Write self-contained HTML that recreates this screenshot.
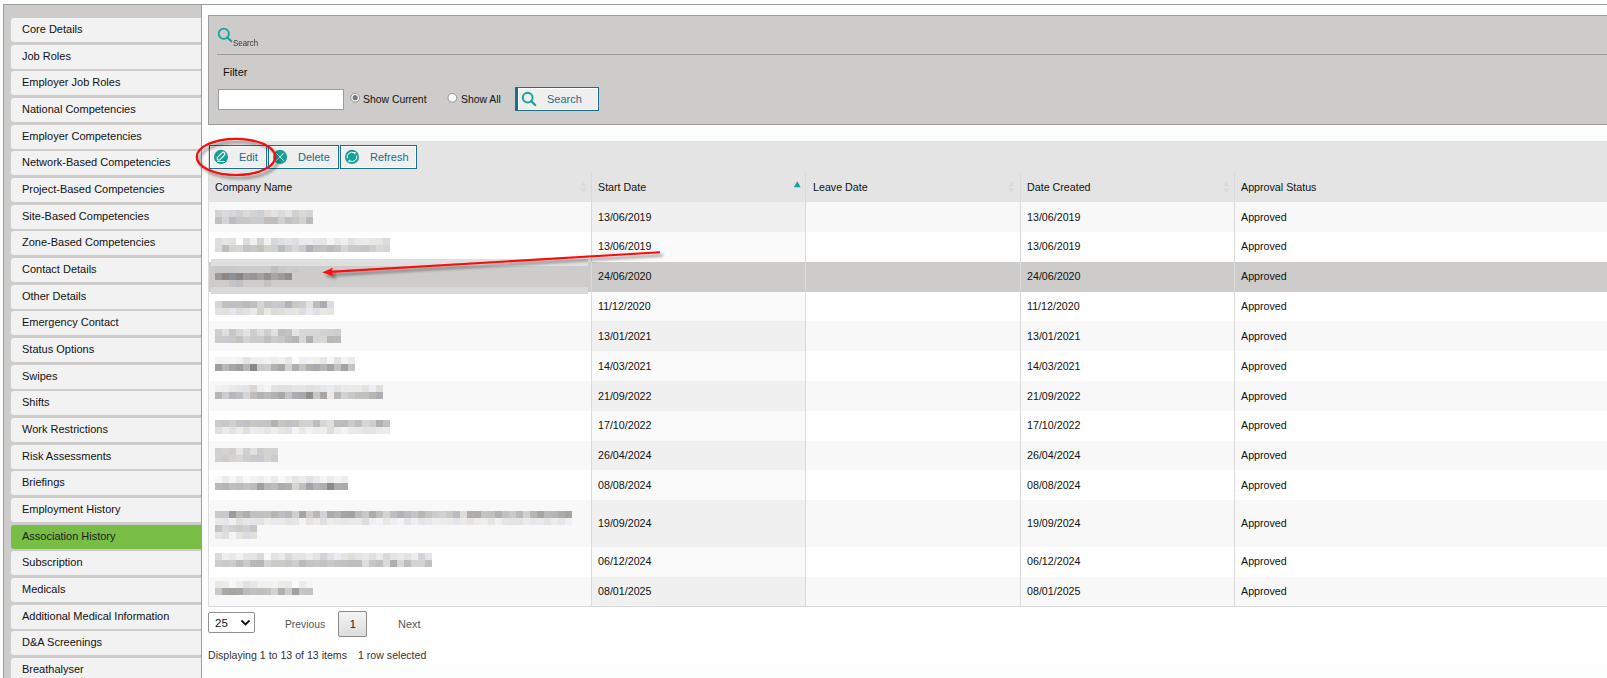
<!DOCTYPE html>
<html><head><meta charset="utf-8">
<style>
*{box-sizing:border-box}
html,body{margin:0;padding:0}
body{width:1607px;height:678px;overflow:hidden;position:relative;background:#fcfdfd;font-family:"Liberation Sans",sans-serif;font-size:11px;color:#222}
.a{position:absolute}
#topline{left:3px;top:4px;width:1604px;height:1px;background:#9c9c9c}
#side{left:3px;top:4px;width:199px;height:700px;background:#cdcccb;border-left:1px solid #9c9c9c;border-top:1px solid #9c9c9c;border-right:1px solid #9c9c9c}
.tab{position:absolute;left:11px;width:190px;height:24px;background:#f2f2f2;border-radius:3px 0 0 3px;padding-left:11px;line-height:23px;white-space:nowrap;color:#111}
.tab.on{background:#78be46;color:#1a1a1a}
#panel{left:208px;top:15px;width:1420px;height:110px;background:#cdcccb;border:1px solid #9c9c9c}
#sep{left:217px;top:54px;width:1400px;height:1px;background:#9c9c9c}
#grid{left:208px;top:141px;width:1420px;height:466px;border-left:1px solid #dcdcdc;border-bottom:1px solid #d8d8d8;background:#fff}
#tbar{left:209px;top:141px;width:1410px;height:61px;background:#e4e4e4}
.btn{position:absolute;top:145px;height:24px;border:1px solid #1d6e8c;background:#efefef;box-shadow:inset 0 0 0 1px rgba(255,255,255,0.7);color:#1a6b8c;white-space:nowrap}
.btn span{position:absolute;top:4px;line-height:14px}
.ico{position:absolute;top:3.7px;width:14.2px;height:14.2px;border-radius:50%;background:#17a097}
.hd{position:absolute;top:172px;height:30px;line-height:30px;white-space:nowrap;color:#111;font-size:10.7px}
.vsep{position:absolute;top:172px;height:434px;width:1px;background:#dadada}
.row{position:absolute;left:209px;width:1400px}
.sc{position:absolute;left:383px;top:0;width:213px}
.cell{position:absolute;top:0;white-space:nowrap;color:#111;font-size:10.7px}
.txt{position:absolute;white-space:nowrap;line-height:14px}
</style></head><body>
<div class="a" id="topline"></div>
<div class="a" id="side"></div>
<div class="tab" style="top:18.00px">Core Details</div>
<div class="tab" style="top:44.67px">Job Roles</div>
<div class="tab" style="top:71.33px">Employer Job Roles</div>
<div class="tab" style="top:98.00px">National Competencies</div>
<div class="tab" style="top:124.67px">Employer Competencies</div>
<div class="tab" style="top:151.33px">Network-Based Competencies</div>
<div class="tab" style="top:178.00px">Project-Based Competencies</div>
<div class="tab" style="top:204.67px">Site-Based Competencies</div>
<div class="tab" style="top:231.33px">Zone-Based Competencies</div>
<div class="tab" style="top:258.00px">Contact Details</div>
<div class="tab" style="top:284.67px">Other Details</div>
<div class="tab" style="top:311.33px">Emergency Contact</div>
<div class="tab" style="top:338.00px">Status Options</div>
<div class="tab" style="top:364.67px">Swipes</div>
<div class="tab" style="top:391.33px">Shifts</div>
<div class="tab" style="top:418.00px">Work Restrictions</div>
<div class="tab" style="top:444.67px">Risk Assessments</div>
<div class="tab" style="top:471.33px">Briefings</div>
<div class="tab" style="top:498.00px">Employment History</div>
<div class="tab on" style="top:524.67px">Association History</div>
<div class="tab" style="top:551.33px">Subscription</div>
<div class="tab" style="top:578.00px">Medicals</div>
<div class="tab" style="top:604.67px">Additional Medical Information</div>
<div class="tab" style="top:631.33px">D&amp;A Screenings</div>
<div class="tab" style="top:658.00px">Breathalyser</div>

<div class="a" id="panel"></div>
<div class="a" id="sep"></div>
<svg class="a" style="left:214px;top:24px" width="22" height="22" viewBox="214 24 22 22">
<circle cx="223.8" cy="33.8" r="5.1" fill="none" stroke="#17a3a0" stroke-width="1.8"/>
<line x1="227.5" y1="37.5" x2="231.3" y2="41.3" stroke="#17a3a0" stroke-width="2" stroke-linecap="round"/>
</svg>
<div class="txt" style="left:233px;top:36.7px;font-size:9.2px;line-height:12px;color:#333;transform:scaleX(0.86);transform-origin:0 0">Search</div>
<div class="txt" style="left:223px;top:65px;color:#111">Filter</div>
<div class="a" style="left:218px;top:89px;width:126px;height:21px;background:#fff;border:1px solid #9c9c9c"></div>
<svg class="a" style="left:348px;top:90px" width="16" height="16" viewBox="348 90 16 16">
<circle cx="355.2" cy="97.7" r="4.4" fill="#fff" stroke="#8a8a8a" stroke-width="0.9"/>
<circle cx="355.2" cy="97.7" r="2.6" fill="#7a7a7a"/>
</svg>
<div class="txt" style="left:363px;top:93px;color:#111;font-size:10.4px">Show Current</div>
<svg class="a" style="left:445px;top:90px" width="16" height="16" viewBox="445 90 16 16">
<circle cx="452.4" cy="97.9" r="4.4" fill="#fff" stroke="#8a8a8a" stroke-width="0.9"/>
</svg>
<div class="txt" style="left:461px;top:93px;color:#111;font-size:10.4px">Show All</div>
<div class="a" style="left:515px;top:87px;width:84px;height:24px;border:1px solid #1d6e8c;border-left:3px solid #1d6e8c;background:#efefef;box-shadow:inset 0 0 0 1px #fff"></div>
<svg class="a" style="left:518px;top:88px" width="22" height="22" viewBox="518 88 22 22">
<circle cx="527.7" cy="97.6" r="4.9" fill="none" stroke="#16a39a" stroke-width="2"/>
<line x1="531.3" y1="101.2" x2="535.2" y2="105" stroke="#16a39a" stroke-width="2.2" stroke-linecap="round"/>
</svg>
<div class="txt" style="left:547px;top:92px;color:#1f6b8e">Search</div>

<div class="a" style="left:208px;top:606px;width:1400px;height:58px;background:#fff"></div>
<div class="a" id="grid"></div>
<div class="a" id="tbar"></div>

<div class="row" style="top:202px;height:30px;line-height:30px;background:#f8f8f8"><div class="sc" style="background:#f0f0f0;height:30px"></div><span class="cell" style="left:389px;top:0px">13/06/2019</span><span class="cell" style="left:818px;top:0px">13/06/2019</span><span class="cell" style="left:1032px;top:0px">Approved</span></div>
<div class="row" style="top:232px;height:30px;line-height:30px;background:#ffffff"><div class="sc" style="background:#fafafa;height:30px"></div><span class="cell" style="left:389px;top:-1px">13/06/2019</span><span class="cell" style="left:818px;top:-1px">13/06/2019</span><span class="cell" style="left:1032px;top:-1px">Approved</span></div>
<div class="row" style="top:262px;height:30px;line-height:30px;background:#cdcccb"><div class="sc" style="background:#cdcccb;height:30px"></div><span class="cell" style="left:389px;top:-1px">24/06/2020</span><span class="cell" style="left:818px;top:-1px">24/06/2020</span><span class="cell" style="left:1032px;top:-1px">Approved</span></div>
<div class="row" style="top:292px;height:29px;line-height:29px;background:#ffffff"><div class="sc" style="background:#fafafa;height:29px"></div><span class="cell" style="left:389px;top:0px">11/12/2020</span><span class="cell" style="left:818px;top:0px">11/12/2020</span><span class="cell" style="left:1032px;top:0px">Approved</span></div>
<div class="row" style="top:321px;height:30px;line-height:30px;background:#f8f8f8"><div class="sc" style="background:#f0f0f0;height:30px"></div><span class="cell" style="left:389px;top:0px">13/01/2021</span><span class="cell" style="left:818px;top:0px">13/01/2021</span><span class="cell" style="left:1032px;top:0px">Approved</span></div>
<div class="row" style="top:351px;height:30px;line-height:30px;background:#ffffff"><div class="sc" style="background:#fafafa;height:30px"></div><span class="cell" style="left:389px;top:0px">14/03/2021</span><span class="cell" style="left:818px;top:0px">14/03/2021</span><span class="cell" style="left:1032px;top:0px">Approved</span></div>
<div class="row" style="top:381px;height:30px;line-height:30px;background:#f8f8f8"><div class="sc" style="background:#f0f0f0;height:30px"></div><span class="cell" style="left:389px;top:0px">21/09/2022</span><span class="cell" style="left:818px;top:0px">21/09/2022</span><span class="cell" style="left:1032px;top:0px">Approved</span></div>
<div class="row" style="top:411px;height:30px;line-height:30px;background:#ffffff"><div class="sc" style="background:#fafafa;height:30px"></div><span class="cell" style="left:389px;top:-1px">17/10/2022</span><span class="cell" style="left:818px;top:-1px">17/10/2022</span><span class="cell" style="left:1032px;top:-1px">Approved</span></div>
<div class="row" style="top:441px;height:29px;line-height:29px;background:#f8f8f8"><div class="sc" style="background:#f0f0f0;height:29px"></div><span class="cell" style="left:389px;top:0px">26/04/2024</span><span class="cell" style="left:818px;top:0px">26/04/2024</span><span class="cell" style="left:1032px;top:0px">Approved</span></div>
<div class="row" style="top:470px;height:30px;line-height:30px;background:#ffffff"><div class="sc" style="background:#fafafa;height:30px"></div><span class="cell" style="left:389px;top:0px">08/08/2024</span><span class="cell" style="left:818px;top:0px">08/08/2024</span><span class="cell" style="left:1032px;top:0px">Approved</span></div>
<div class="row" style="top:500px;height:47px;line-height:47px;background:#f8f8f8"><div class="sc" style="background:#f0f0f0;height:47px"></div><span class="cell" style="left:389px;top:0px">19/09/2024</span><span class="cell" style="left:818px;top:0px">19/09/2024</span><span class="cell" style="left:1032px;top:0px">Approved</span></div>
<div class="row" style="top:547px;height:30px;line-height:30px;background:#ffffff"><div class="sc" style="background:#fafafa;height:30px"></div><span class="cell" style="left:389px;top:-1px">06/12/2024</span><span class="cell" style="left:818px;top:-1px">06/12/2024</span><span class="cell" style="left:1032px;top:-1px">Approved</span></div>
<div class="row" style="top:577px;height:29px;line-height:29px;background:#f8f8f8"><div class="sc" style="background:#f0f0f0;height:29px"></div><span class="cell" style="left:389px;top:0px">08/01/2025</span><span class="cell" style="left:818px;top:0px">08/01/2025</span><span class="cell" style="left:1032px;top:0px">Approved</span></div>

<div class="vsep" style="left:591px"></div>
<div class="vsep" style="left:805px"></div>
<div class="vsep" style="left:1020px"></div>
<div class="vsep" style="left:1234px"></div>

<div class="hd" style="left:215px">Company Name</div>
<div class="hd" style="left:598px">Start Date</div>
<div class="hd" style="left:813px">Leave Date</div>
<div class="hd" style="left:1027px">Date Created</div>
<div class="hd" style="left:1241px">Approval Status</div>
<svg class="a" style="left:0;top:0" width="1607" height="678" viewBox="0 0 1607 678">
<path d="M583.5 181.6 L586.4 186.6 L580.6 186.6 Z M580.6 188.3 L586.4 188.3 L583.5 193 Z" fill="#dadada"/>
<path d="M1011.3 181.6 L1014.2 186.6 L1008.4 186.6 Z M1008.4 188.3 L1014.2 188.3 L1011.3 193 Z" fill="#dadada"/>
<path d="M1226.3 181.6 L1229.2 186.6 L1223.4 186.6 Z M1223.4 188.3 L1229.2 188.3 L1226.3 193 Z" fill="#dadada"/>
<path d="M797.3 181.3 L800.6 187.2 L793.8 187.2 Z" fill="#0fa39b"/>
</svg>

<div class="btn" style="left:209px;width:58px"><span style="left:28.9px">Edit</span></div>
<div class="btn" style="left:268px;width:71px"><span style="left:29px">Delete</span></div>
<div class="btn" style="left:340px;width:77px"><span style="left:29px">Refresh</span></div>
<svg class="a" style="left:0;top:0" width="1607" height="678" viewBox="0 0 1607 678">
<circle cx="221" cy="156.9" r="7.05" fill="#17a097"/><circle cx="280" cy="156.9" r="7.05" fill="#17a097"/><circle cx="352" cy="156.9" r="7.05" fill="#17a097"/>
<!-- edit pencil -->
<rect x="216.2" y="154.5" width="9.6" height="3.4" rx="1.7" fill="none" stroke="#fff" stroke-width="1.1" transform="rotate(-45 221 156.2)"/>
<line x1="217" y1="161.5" x2="225" y2="161.5" stroke="#fff" stroke-width="1"/>
<!-- delete x -->
<line x1="276.3" y1="153.2" x2="283.6" y2="160.6" stroke="#fff" stroke-width="0.9"/>
<line x1="283.6" y1="153.2" x2="276.3" y2="160.6" stroke="#fff" stroke-width="0.9"/>
<!-- refresh -->
<path d="M354.4 152.9 A4.8 4.8 0 0 0 347.3 158.2" fill="none" stroke="#fff" stroke-width="1"/>
<path d="M349.7 160.9 A4.8 4.8 0 0 0 356.7 155.5" fill="none" stroke="#fff" stroke-width="1"/>
<path d="M353.3 151.9 L356 152.1 L354.6 154.5 Z" fill="#fff"/>
<path d="M350.7 161.9 L348 161.7 L349.4 159.3 Z" fill="#fff"/>
</svg>

<svg class="a" style="left:0;top:0" width="1607" height="678" viewBox="0 0 1607 678"><defs><filter id="bl" x="0" y="0" width="100%" height="100%"><feGaussianBlur stdDeviation="0.4"/></filter></defs><g filter="url(#bl)"><rect x="215" y="210" width="7" height="7" fill="#d3d3d3"/><rect x="222" y="210" width="7" height="7" fill="#dbdbdb"/><rect x="229" y="210" width="7" height="7" fill="#d5d7d9"/><rect x="236" y="210" width="7" height="7" fill="#d1d1d1"/><rect x="243" y="210" width="7" height="7" fill="#dbdbdb"/><rect x="250" y="210" width="7" height="7" fill="#d5d4d2"/><rect x="257" y="210" width="7" height="7" fill="#cdcfd1"/><rect x="264" y="210" width="7" height="7" fill="#dcdbd9"/><rect x="271" y="210" width="7" height="7" fill="#e4e2df"/><rect x="278" y="210" width="7" height="7" fill="#d8dadc"/><rect x="285" y="210" width="7" height="7" fill="#e5e4e2"/><rect x="292" y="210" width="7" height="7" fill="#d1d1d1"/><rect x="299" y="210" width="7" height="7" fill="#dbd9d6"/><rect x="306" y="210" width="7" height="7" fill="#d2d4d8"/><rect x="215" y="217" width="7" height="7" fill="#bec0c2"/><rect x="222" y="217" width="7" height="7" fill="#d2d4d8"/><rect x="229" y="217" width="7" height="7" fill="#bdbdbd"/><rect x="236" y="217" width="7" height="7" fill="#c5c7c9"/><rect x="243" y="217" width="7" height="7" fill="#c7c7c7"/><rect x="250" y="217" width="7" height="7" fill="#c8cacc"/><rect x="257" y="217" width="7" height="7" fill="#c8cacc"/><rect x="264" y="217" width="7" height="7" fill="#c0bebb"/><rect x="271" y="217" width="7" height="7" fill="#bcbec2"/><rect x="278" y="217" width="7" height="7" fill="#d1d0ce"/><rect x="285" y="217" width="7" height="7" fill="#bfc1c5"/><rect x="292" y="217" width="7" height="7" fill="#c9c7c4"/><rect x="299" y="217" width="7" height="7" fill="#d5d3d0"/><rect x="306" y="217" width="7" height="7" fill="#bcbcbc"/><rect x="215" y="238" width="7" height="7" fill="#dcdee2"/><rect x="222" y="238" width="7" height="7" fill="#e6e5e3"/><rect x="229" y="238" width="7" height="7" fill="#e2e2e2"/><rect x="236" y="238" width="7" height="7" fill="#fafcfe"/><rect x="243" y="238" width="7" height="7" fill="#dedcd9"/><rect x="250" y="238" width="7" height="7" fill="#f1f0ee"/><rect x="257" y="238" width="7" height="7" fill="#d5d5d5"/><rect x="264" y="238" width="7" height="7" fill="#eff1f3"/><rect x="271" y="238" width="7" height="7" fill="#d6d8dc"/><rect x="278" y="238" width="7" height="7" fill="#dddfe3"/><rect x="285" y="238" width="7" height="7" fill="#e2e4e6"/><rect x="292" y="238" width="7" height="7" fill="#e0dfdd"/><rect x="299" y="238" width="7" height="7" fill="#e8eaee"/><rect x="306" y="238" width="7" height="7" fill="#ecebe9"/><rect x="313" y="238" width="7" height="7" fill="#e4e6ea"/><rect x="320" y="238" width="7" height="7" fill="#e3e5e7"/><rect x="327" y="238" width="7" height="7" fill="#f3f5f9"/><rect x="334" y="238" width="7" height="7" fill="#eae9e7"/><rect x="341" y="238" width="7" height="7" fill="#f0efed"/><rect x="348" y="238" width="7" height="7" fill="#e0e2e6"/><rect x="355" y="238" width="7" height="7" fill="#e9e9e9"/><rect x="362" y="238" width="7" height="7" fill="#edebe8"/><rect x="369" y="238" width="7" height="7" fill="#eae8e5"/><rect x="376" y="238" width="7" height="7" fill="#e6e5e3"/><rect x="383" y="238" width="7" height="7" fill="#dbdbdb"/><rect x="215" y="245" width="7" height="7" fill="#dedcd9"/><rect x="222" y="245" width="7" height="7" fill="#c0bebb"/><rect x="229" y="245" width="7" height="7" fill="#d4d3d1"/><rect x="236" y="245" width="7" height="7" fill="#d6d5d3"/><rect x="243" y="245" width="7" height="7" fill="#c2c4c8"/><rect x="250" y="245" width="7" height="7" fill="#cac8c5"/><rect x="257" y="245" width="7" height="7" fill="#c4c2bf"/><rect x="264" y="245" width="7" height="7" fill="#d4d2cf"/><rect x="271" y="245" width="7" height="7" fill="#d0d0d0"/><rect x="278" y="245" width="7" height="7" fill="#babcc0"/><rect x="285" y="245" width="7" height="7" fill="#cbcdd1"/><rect x="292" y="245" width="7" height="7" fill="#d6d8dc"/><rect x="299" y="245" width="7" height="7" fill="#cbcdcf"/><rect x="306" y="245" width="7" height="7" fill="#afb1b3"/><rect x="313" y="245" width="7" height="7" fill="#bec0c2"/><rect x="320" y="245" width="7" height="7" fill="#c4c3c1"/><rect x="327" y="245" width="7" height="7" fill="#babcbe"/><rect x="334" y="245" width="7" height="7" fill="#c3c3c3"/><rect x="341" y="245" width="7" height="7" fill="#d7d6d4"/><rect x="348" y="245" width="7" height="7" fill="#cacaca"/><rect x="355" y="245" width="7" height="7" fill="#cbc9c6"/><rect x="362" y="245" width="7" height="7" fill="#c5c7c9"/><rect x="369" y="245" width="7" height="7" fill="#cfcfcf"/><rect x="376" y="245" width="7" height="7" fill="#d7d9db"/><rect x="383" y="245" width="7" height="7" fill="#d6d6d6"/><rect x="215" y="301" width="7" height="7" fill="#d5d5d5"/><rect x="222" y="301" width="7" height="7" fill="#c2c0bd"/><rect x="229" y="301" width="7" height="7" fill="#bdbfc3"/><rect x="236" y="301" width="7" height="7" fill="#bec0c4"/><rect x="243" y="301" width="7" height="7" fill="#bbbbbb"/><rect x="250" y="301" width="7" height="7" fill="#c0bfbd"/><rect x="257" y="301" width="7" height="7" fill="#d6d5d3"/><rect x="264" y="301" width="7" height="7" fill="#c2c4c8"/><rect x="271" y="301" width="7" height="7" fill="#c7c9cd"/><rect x="278" y="301" width="7" height="7" fill="#c5c7cb"/><rect x="285" y="301" width="7" height="7" fill="#b1b3b5"/><rect x="292" y="301" width="7" height="7" fill="#c8c8c8"/><rect x="299" y="301" width="7" height="7" fill="#cbcdd1"/><rect x="306" y="301" width="7" height="7" fill="#e4e2df"/><rect x="313" y="301" width="7" height="7" fill="#babcbe"/><rect x="320" y="301" width="7" height="7" fill="#aaacb0"/><rect x="327" y="301" width="7" height="7" fill="#dadce0"/><rect x="215" y="308" width="7" height="7" fill="#e0e2e4"/><rect x="222" y="308" width="7" height="7" fill="#e3e1de"/><rect x="229" y="308" width="7" height="7" fill="#e4e6e8"/><rect x="236" y="308" width="7" height="7" fill="#dfddda"/><rect x="243" y="308" width="7" height="7" fill="#e0e2e4"/><rect x="250" y="308" width="7" height="7" fill="#eceae7"/><rect x="257" y="308" width="7" height="7" fill="#d5d3d0"/><rect x="264" y="308" width="7" height="7" fill="#eae8e5"/><rect x="271" y="308" width="7" height="7" fill="#dddbd8"/><rect x="278" y="308" width="7" height="7" fill="#dedede"/><rect x="285" y="308" width="7" height="7" fill="#e3e3e3"/><rect x="292" y="308" width="7" height="7" fill="#e7e5e2"/><rect x="299" y="308" width="7" height="7" fill="#dbdddf"/><rect x="306" y="308" width="7" height="7" fill="#e7e9ed"/><rect x="313" y="308" width="7" height="7" fill="#dfe1e5"/><rect x="320" y="308" width="7" height="7" fill="#e9e8e6"/><rect x="327" y="308" width="7" height="7" fill="#e7e5e2"/><rect x="215" y="329" width="7" height="7" fill="#cdcfd1"/><rect x="222" y="329" width="7" height="7" fill="#dfdfdf"/><rect x="229" y="329" width="7" height="7" fill="#c7c7c7"/><rect x="236" y="329" width="7" height="7" fill="#d7d7d7"/><rect x="243" y="329" width="7" height="7" fill="#e6e4e1"/><rect x="250" y="329" width="7" height="7" fill="#cfcecc"/><rect x="257" y="329" width="7" height="7" fill="#dbdde1"/><rect x="264" y="329" width="7" height="7" fill="#cfcfcf"/><rect x="271" y="329" width="7" height="7" fill="#e1e0de"/><rect x="278" y="329" width="7" height="7" fill="#bfbebc"/><rect x="285" y="329" width="7" height="7" fill="#c4c2bf"/><rect x="292" y="329" width="7" height="7" fill="#e6e4e1"/><rect x="299" y="329" width="7" height="7" fill="#d6d8da"/><rect x="306" y="329" width="7" height="7" fill="#d8d7d5"/><rect x="313" y="329" width="7" height="7" fill="#d5d7d9"/><rect x="320" y="329" width="7" height="7" fill="#d3d2d0"/><rect x="327" y="329" width="7" height="7" fill="#ced0d2"/><rect x="334" y="329" width="7" height="7" fill="#ccced0"/><rect x="215" y="336" width="7" height="7" fill="#cbcbcb"/><rect x="222" y="336" width="7" height="7" fill="#c9cbcd"/><rect x="229" y="336" width="7" height="7" fill="#cbc9c6"/><rect x="236" y="336" width="7" height="7" fill="#c4c2bf"/><rect x="243" y="336" width="7" height="7" fill="#d1d3d5"/><rect x="250" y="336" width="7" height="7" fill="#cdcbc8"/><rect x="257" y="336" width="7" height="7" fill="#c9cbcd"/><rect x="264" y="336" width="7" height="7" fill="#c0bfbd"/><rect x="271" y="336" width="7" height="7" fill="#c9cbcf"/><rect x="278" y="336" width="7" height="7" fill="#c8c7c5"/><rect x="285" y="336" width="7" height="7" fill="#babcbe"/><rect x="292" y="336" width="7" height="7" fill="#b7b6b4"/><rect x="299" y="336" width="7" height="7" fill="#d9d7d4"/><rect x="306" y="336" width="7" height="7" fill="#aeb0b2"/><rect x="313" y="336" width="7" height="7" fill="#d6d5d3"/><rect x="320" y="336" width="7" height="7" fill="#d9d7d4"/><rect x="327" y="336" width="7" height="7" fill="#b9b7b4"/><rect x="334" y="336" width="7" height="7" fill="#bcbab7"/><rect x="215" y="357" width="7" height="7" fill="#f3f3f3"/><rect x="222" y="357" width="7" height="7" fill="#f2f4f6"/><rect x="229" y="357" width="7" height="7" fill="#f4f6f8"/><rect x="236" y="357" width="7" height="7" fill="#eff1f3"/><rect x="243" y="357" width="7" height="7" fill="#e1e3e5"/><rect x="250" y="357" width="7" height="7" fill="#efefef"/><rect x="257" y="357" width="7" height="7" fill="#eeeeee"/><rect x="264" y="357" width="7" height="7" fill="#f0f2f4"/><rect x="271" y="357" width="7" height="7" fill="#ececec"/><rect x="278" y="357" width="7" height="7" fill="#f1f0ee"/><rect x="285" y="357" width="7" height="7" fill="#e4e6e8"/><rect x="292" y="357" width="7" height="7" fill="#fafcfe"/><rect x="299" y="357" width="7" height="7" fill="#edeff1"/><rect x="306" y="357" width="7" height="7" fill="#f0f2f4"/><rect x="313" y="357" width="7" height="7" fill="#f2f0ed"/><rect x="320" y="357" width="7" height="7" fill="#e5e7e9"/><rect x="327" y="357" width="7" height="7" fill="#f5f7fb"/><rect x="334" y="357" width="7" height="7" fill="#e1e3e5"/><rect x="341" y="357" width="7" height="7" fill="#f4f3f1"/><rect x="348" y="357" width="7" height="7" fill="#edebe8"/><rect x="215" y="364" width="7" height="7" fill="#9d9fa3"/><rect x="222" y="364" width="7" height="7" fill="#b8b8b8"/><rect x="229" y="364" width="7" height="7" fill="#a8a6a3"/><rect x="236" y="364" width="7" height="7" fill="#9c9ea2"/><rect x="243" y="364" width="7" height="7" fill="#bab8b5"/><rect x="250" y="364" width="7" height="7" fill="#87898d"/><rect x="257" y="364" width="7" height="7" fill="#cac9c7"/><rect x="264" y="364" width="7" height="7" fill="#cfcdca"/><rect x="271" y="364" width="7" height="7" fill="#b2b1af"/><rect x="278" y="364" width="7" height="7" fill="#a9a7a4"/><rect x="285" y="364" width="7" height="7" fill="#d3d1ce"/><rect x="292" y="364" width="7" height="7" fill="#b0afad"/><rect x="299" y="364" width="7" height="7" fill="#c5c4c2"/><rect x="306" y="364" width="7" height="7" fill="#b1afac"/><rect x="313" y="364" width="7" height="7" fill="#a8aaae"/><rect x="320" y="364" width="7" height="7" fill="#b6b6b6"/><rect x="327" y="364" width="7" height="7" fill="#a5a5a5"/><rect x="334" y="364" width="7" height="7" fill="#c3c2c0"/><rect x="341" y="364" width="7" height="7" fill="#a1a3a5"/><rect x="348" y="364" width="7" height="7" fill="#c5c5c5"/><rect x="215" y="385" width="7" height="7" fill="#f3f1ee"/><rect x="222" y="385" width="7" height="7" fill="#efefef"/><rect x="229" y="385" width="7" height="7" fill="#ebe9e6"/><rect x="236" y="385" width="7" height="7" fill="#e4e6ea"/><rect x="243" y="385" width="7" height="7" fill="#e1e3e7"/><rect x="250" y="385" width="7" height="7" fill="#d8d7d5"/><rect x="257" y="385" width="7" height="7" fill="#eceef0"/><rect x="264" y="385" width="7" height="7" fill="#f5f4f2"/><rect x="271" y="385" width="7" height="7" fill="#e2e2e2"/><rect x="278" y="385" width="7" height="7" fill="#e2e0dd"/><rect x="285" y="385" width="7" height="7" fill="#e1e1e1"/><rect x="292" y="385" width="7" height="7" fill="#e5e5e5"/><rect x="299" y="385" width="7" height="7" fill="#e7e5e2"/><rect x="306" y="385" width="7" height="7" fill="#e0e0e0"/><rect x="313" y="385" width="7" height="7" fill="#e3e3e3"/><rect x="320" y="385" width="7" height="7" fill="#e5e7eb"/><rect x="327" y="385" width="7" height="7" fill="#e9ebef"/><rect x="334" y="385" width="7" height="7" fill="#e1e3e5"/><rect x="341" y="385" width="7" height="7" fill="#eceae7"/><rect x="348" y="385" width="7" height="7" fill="#ebebeb"/><rect x="355" y="385" width="7" height="7" fill="#eceae7"/><rect x="362" y="385" width="7" height="7" fill="#e4e2df"/><rect x="369" y="385" width="7" height="7" fill="#eceef0"/><rect x="376" y="385" width="7" height="7" fill="#e1dfdc"/><rect x="215" y="392" width="7" height="7" fill="#b9b7b4"/><rect x="222" y="392" width="7" height="7" fill="#cbcdd1"/><rect x="229" y="392" width="7" height="7" fill="#b7b9bd"/><rect x="236" y="392" width="7" height="7" fill="#bebebe"/><rect x="243" y="392" width="7" height="7" fill="#d3d5d7"/><rect x="250" y="392" width="7" height="7" fill="#c0bebb"/><rect x="257" y="392" width="7" height="7" fill="#b3b2b0"/><rect x="264" y="392" width="7" height="7" fill="#bababa"/><rect x="271" y="392" width="7" height="7" fill="#b2b1af"/><rect x="278" y="392" width="7" height="7" fill="#a6a8aa"/><rect x="285" y="392" width="7" height="7" fill="#c2c4c6"/><rect x="292" y="392" width="7" height="7" fill="#abadb1"/><rect x="299" y="392" width="7" height="7" fill="#a7a9ad"/><rect x="306" y="392" width="7" height="7" fill="#93918e"/><rect x="313" y="392" width="7" height="7" fill="#cac8c5"/><rect x="320" y="392" width="7" height="7" fill="#a9a8a6"/><rect x="327" y="392" width="7" height="7" fill="#ebe9e6"/><rect x="334" y="392" width="7" height="7" fill="#b8b8b8"/><rect x="341" y="392" width="7" height="7" fill="#d0d2d6"/><rect x="348" y="392" width="7" height="7" fill="#cac9c7"/><rect x="355" y="392" width="7" height="7" fill="#c2c1bf"/><rect x="362" y="392" width="7" height="7" fill="#bfc1c3"/><rect x="369" y="392" width="7" height="7" fill="#b7b5b2"/><rect x="376" y="392" width="7" height="7" fill="#adafb3"/><rect x="215" y="420" width="7" height="7" fill="#c9cbcf"/><rect x="222" y="420" width="7" height="7" fill="#c9c8c6"/><rect x="229" y="420" width="7" height="7" fill="#ced0d4"/><rect x="236" y="420" width="7" height="7" fill="#c2c4c6"/><rect x="243" y="420" width="7" height="7" fill="#bfc1c5"/><rect x="250" y="420" width="7" height="7" fill="#c9c7c4"/><rect x="257" y="420" width="7" height="7" fill="#c6c5c3"/><rect x="264" y="420" width="7" height="7" fill="#c4c4c4"/><rect x="271" y="420" width="7" height="7" fill="#b5b3b0"/><rect x="278" y="420" width="7" height="7" fill="#c8c6c3"/><rect x="285" y="420" width="7" height="7" fill="#bfc1c5"/><rect x="292" y="420" width="7" height="7" fill="#c3c3c3"/><rect x="299" y="420" width="7" height="7" fill="#d2d1cf"/><rect x="306" y="420" width="7" height="7" fill="#d2d2d2"/><rect x="313" y="420" width="7" height="7" fill="#bdbdbd"/><rect x="320" y="420" width="7" height="7" fill="#d4d6d8"/><rect x="327" y="420" width="7" height="7" fill="#e0dedb"/><rect x="334" y="420" width="7" height="7" fill="#babcbe"/><rect x="341" y="420" width="7" height="7" fill="#bdbcba"/><rect x="348" y="420" width="7" height="7" fill="#cdcbc8"/><rect x="355" y="420" width="7" height="7" fill="#c1bfbc"/><rect x="362" y="420" width="7" height="7" fill="#d6d6d6"/><rect x="369" y="420" width="7" height="7" fill="#ccced0"/><rect x="376" y="420" width="7" height="7" fill="#b3b2b0"/><rect x="383" y="420" width="7" height="7" fill="#c3c1be"/><rect x="215" y="427" width="7" height="7" fill="#dddfe1"/><rect x="222" y="427" width="7" height="7" fill="#eaeaea"/><rect x="229" y="427" width="7" height="7" fill="#e0e2e4"/><rect x="236" y="427" width="7" height="7" fill="#eeece9"/><rect x="243" y="427" width="7" height="7" fill="#e0e0e0"/><rect x="250" y="427" width="7" height="7" fill="#eaecf0"/><rect x="257" y="427" width="7" height="7" fill="#eaeaea"/><rect x="264" y="427" width="7" height="7" fill="#e5e5e5"/><rect x="271" y="427" width="7" height="7" fill="#eeeeee"/><rect x="278" y="427" width="7" height="7" fill="#e6e5e3"/><rect x="285" y="427" width="7" height="7" fill="#e0e2e6"/><rect x="292" y="427" width="7" height="7" fill="#f2f4f6"/><rect x="299" y="427" width="7" height="7" fill="#e8eaec"/><rect x="306" y="427" width="7" height="7" fill="#f3f2f0"/><rect x="313" y="427" width="7" height="7" fill="#ebedf1"/><rect x="320" y="427" width="7" height="7" fill="#f0eeeb"/><rect x="327" y="427" width="7" height="7" fill="#e1dfdc"/><rect x="334" y="427" width="7" height="7" fill="#eeedeb"/><rect x="341" y="427" width="7" height="7" fill="#f5f4f2"/><rect x="348" y="427" width="7" height="7" fill="#e8eaee"/><rect x="355" y="427" width="7" height="7" fill="#e8e8e8"/><rect x="362" y="427" width="7" height="7" fill="#e3e3e3"/><rect x="369" y="427" width="7" height="7" fill="#e2e4e6"/><rect x="376" y="427" width="7" height="7" fill="#e9ebef"/><rect x="383" y="427" width="7" height="7" fill="#ebedef"/><rect x="215" y="448" width="7" height="7" fill="#d0d0d0"/><rect x="222" y="448" width="7" height="7" fill="#d4d3d1"/><rect x="229" y="448" width="7" height="7" fill="#d1cfcc"/><rect x="236" y="448" width="7" height="7" fill="#e6e5e3"/><rect x="243" y="448" width="7" height="7" fill="#d1d0ce"/><rect x="250" y="448" width="7" height="7" fill="#e2e1df"/><rect x="257" y="448" width="7" height="7" fill="#caccce"/><rect x="264" y="448" width="7" height="7" fill="#d5d3d0"/><rect x="271" y="448" width="7" height="7" fill="#d3d2d0"/><rect x="215" y="455" width="7" height="7" fill="#d1d1d1"/><rect x="222" y="455" width="7" height="7" fill="#cbcdcf"/><rect x="229" y="455" width="7" height="7" fill="#d4d3d1"/><rect x="236" y="455" width="7" height="7" fill="#d9d7d4"/><rect x="243" y="455" width="7" height="7" fill="#cdcdcd"/><rect x="250" y="455" width="7" height="7" fill="#c7c9cb"/><rect x="257" y="455" width="7" height="7" fill="#c8cace"/><rect x="264" y="455" width="7" height="7" fill="#d1d3d5"/><rect x="271" y="455" width="7" height="7" fill="#c9cbcf"/><rect x="215" y="476" width="7" height="7" fill="#f9f7f4"/><rect x="222" y="476" width="7" height="7" fill="#ecebe9"/><rect x="229" y="476" width="7" height="7" fill="#f5f5f5"/><rect x="236" y="476" width="7" height="7" fill="#edebe8"/><rect x="243" y="476" width="7" height="7" fill="#f9f8f6"/><rect x="250" y="476" width="7" height="7" fill="#f3f2f0"/><rect x="257" y="476" width="7" height="7" fill="#ebedf1"/><rect x="264" y="476" width="7" height="7" fill="#f6f5f3"/><rect x="271" y="476" width="7" height="7" fill="#ebebeb"/><rect x="278" y="476" width="7" height="7" fill="#f7f9fd"/><rect x="285" y="476" width="7" height="7" fill="#f0f0f0"/><rect x="292" y="476" width="7" height="7" fill="#e6e4e1"/><rect x="299" y="476" width="7" height="7" fill="#eaecf0"/><rect x="306" y="476" width="7" height="7" fill="#e0e2e6"/><rect x="313" y="476" width="7" height="7" fill="#e9ebed"/><rect x="320" y="476" width="7" height="7" fill="#f4f4f4"/><rect x="327" y="476" width="7" height="7" fill="#e8eaee"/><rect x="334" y="476" width="7" height="7" fill="#f4f4f4"/><rect x="341" y="476" width="7" height="7" fill="#eceef2"/><rect x="215" y="483" width="7" height="7" fill="#bbb9b6"/><rect x="222" y="483" width="7" height="7" fill="#b2b4b6"/><rect x="229" y="483" width="7" height="7" fill="#bdbfc3"/><rect x="236" y="483" width="7" height="7" fill="#bcbbb9"/><rect x="243" y="483" width="7" height="7" fill="#c2c2c2"/><rect x="250" y="483" width="7" height="7" fill="#babcbe"/><rect x="257" y="483" width="7" height="7" fill="#9d9fa1"/><rect x="264" y="483" width="7" height="7" fill="#b8b7b5"/><rect x="271" y="483" width="7" height="7" fill="#bdbcba"/><rect x="278" y="483" width="7" height="7" fill="#aaacb0"/><rect x="285" y="483" width="7" height="7" fill="#b1b0ae"/><rect x="292" y="483" width="7" height="7" fill="#d8d6d3"/><rect x="299" y="483" width="7" height="7" fill="#c1bfbc"/><rect x="306" y="483" width="7" height="7" fill="#a2a4a8"/><rect x="313" y="483" width="7" height="7" fill="#b3b5b9"/><rect x="320" y="483" width="7" height="7" fill="#adafb3"/><rect x="327" y="483" width="7" height="7" fill="#8b8a88"/><rect x="334" y="483" width="7" height="7" fill="#aaacae"/><rect x="341" y="483" width="7" height="7" fill="#abaaa8"/><rect x="215" y="511" width="7" height="7" fill="#cacaca"/><rect x="222" y="511" width="7" height="7" fill="#cbc9c6"/><rect x="229" y="511" width="7" height="7" fill="#9a9c9e"/><rect x="236" y="511" width="7" height="7" fill="#bbb9b6"/><rect x="243" y="511" width="7" height="7" fill="#afaeac"/><rect x="250" y="511" width="7" height="7" fill="#c1c0be"/><rect x="257" y="511" width="7" height="7" fill="#c0c0c0"/><rect x="264" y="511" width="7" height="7" fill="#c4c2bf"/><rect x="271" y="511" width="7" height="7" fill="#b8b6b3"/><rect x="278" y="511" width="7" height="7" fill="#bcbec2"/><rect x="285" y="511" width="7" height="7" fill="#b8b8b8"/><rect x="292" y="511" width="7" height="7" fill="#d1d0ce"/><rect x="299" y="511" width="7" height="7" fill="#a8a6a3"/><rect x="306" y="511" width="7" height="7" fill="#cecdcb"/><rect x="313" y="511" width="7" height="7" fill="#b9b8b6"/><rect x="320" y="511" width="7" height="7" fill="#d1d3d7"/><rect x="327" y="511" width="7" height="7" fill="#aaacae"/><rect x="334" y="511" width="7" height="7" fill="#b1b3b5"/><rect x="341" y="511" width="7" height="7" fill="#a6a4a1"/><rect x="348" y="511" width="7" height="7" fill="#a2a2a2"/><rect x="355" y="511" width="7" height="7" fill="#bbbab8"/><rect x="362" y="511" width="7" height="7" fill="#c8c7c5"/><rect x="369" y="511" width="7" height="7" fill="#adadad"/><rect x="376" y="511" width="7" height="7" fill="#c1bfbc"/><rect x="383" y="511" width="7" height="7" fill="#d5d4d2"/><rect x="390" y="511" width="7" height="7" fill="#bdbfc1"/><rect x="397" y="511" width="7" height="7" fill="#b1b3b5"/><rect x="404" y="511" width="7" height="7" fill="#bdbcba"/><rect x="411" y="511" width="7" height="7" fill="#c5c5c5"/><rect x="418" y="511" width="7" height="7" fill="#b9b7b4"/><rect x="425" y="511" width="7" height="7" fill="#c4c4c4"/><rect x="432" y="511" width="7" height="7" fill="#cdccca"/><rect x="439" y="511" width="7" height="7" fill="#d1d1d1"/><rect x="446" y="511" width="7" height="7" fill="#cac8c5"/><rect x="453" y="511" width="7" height="7" fill="#babcc0"/><rect x="460" y="511" width="7" height="7" fill="#dfddda"/><rect x="467" y="511" width="7" height="7" fill="#afaeac"/><rect x="474" y="511" width="7" height="7" fill="#acacac"/><rect x="481" y="511" width="7" height="7" fill="#c2c4c6"/><rect x="488" y="511" width="7" height="7" fill="#c3c1be"/><rect x="495" y="511" width="7" height="7" fill="#afb1b3"/><rect x="502" y="511" width="7" height="7" fill="#c1c1c1"/><rect x="509" y="511" width="7" height="7" fill="#cac9c7"/><rect x="516" y="511" width="7" height="7" fill="#b7b9bd"/><rect x="523" y="511" width="7" height="7" fill="#d2d0cd"/><rect x="530" y="511" width="7" height="7" fill="#b7b6b4"/><rect x="537" y="511" width="7" height="7" fill="#a6a6a6"/><rect x="544" y="511" width="7" height="7" fill="#b9b8b6"/><rect x="551" y="511" width="7" height="7" fill="#b6b6b6"/><rect x="558" y="511" width="7" height="7" fill="#aeaca9"/><rect x="565" y="511" width="7" height="7" fill="#a5a4a2"/><rect x="215" y="518" width="7" height="7" fill="#e8e8e8"/><rect x="222" y="518" width="7" height="7" fill="#e4e6ea"/><rect x="229" y="518" width="7" height="7" fill="#f2f0ed"/><rect x="236" y="518" width="7" height="7" fill="#e1e0de"/><rect x="243" y="518" width="7" height="7" fill="#e5e7eb"/><rect x="250" y="518" width="7" height="7" fill="#e3e5e9"/><rect x="257" y="518" width="7" height="7" fill="#e2e4e6"/><rect x="264" y="518" width="7" height="7" fill="#f0eeeb"/><rect x="271" y="518" width="7" height="7" fill="#e7e9ed"/><rect x="278" y="518" width="7" height="7" fill="#ebeae8"/><rect x="285" y="518" width="7" height="7" fill="#e6e4e1"/><rect x="292" y="518" width="7" height="7" fill="#e6e6e6"/><rect x="299" y="518" width="7" height="7" fill="#f2f4f6"/><rect x="306" y="518" width="7" height="7" fill="#e6e4e1"/><rect x="313" y="518" width="7" height="7" fill="#ebeae8"/><rect x="320" y="518" width="7" height="7" fill="#dee0e2"/><rect x="327" y="518" width="7" height="7" fill="#eeece9"/><rect x="334" y="518" width="7" height="7" fill="#e9e9e9"/><rect x="341" y="518" width="7" height="7" fill="#e5e7e9"/><rect x="348" y="518" width="7" height="7" fill="#e9e9e9"/><rect x="355" y="518" width="7" height="7" fill="#ebe9e6"/><rect x="362" y="518" width="7" height="7" fill="#dadce0"/><rect x="369" y="518" width="7" height="7" fill="#efefef"/><rect x="376" y="518" width="7" height="7" fill="#f2f4f8"/><rect x="383" y="518" width="7" height="7" fill="#e9e7e4"/><rect x="390" y="518" width="7" height="7" fill="#f0efed"/><rect x="397" y="518" width="7" height="7" fill="#f4f4f4"/><rect x="404" y="518" width="7" height="7" fill="#e1e3e7"/><rect x="411" y="518" width="7" height="7" fill="#edeff3"/><rect x="418" y="518" width="7" height="7" fill="#e5e5e5"/><rect x="425" y="518" width="7" height="7" fill="#e6e8ec"/><rect x="432" y="518" width="7" height="7" fill="#ededed"/><rect x="439" y="518" width="7" height="7" fill="#e9ebed"/><rect x="446" y="518" width="7" height="7" fill="#e8eaee"/><rect x="453" y="518" width="7" height="7" fill="#e4e6ea"/><rect x="460" y="518" width="7" height="7" fill="#eaeaea"/><rect x="467" y="518" width="7" height="7" fill="#e5e4e2"/><rect x="474" y="518" width="7" height="7" fill="#edecea"/><rect x="481" y="518" width="7" height="7" fill="#f1efec"/><rect x="488" y="518" width="7" height="7" fill="#e6e5e3"/><rect x="495" y="518" width="7" height="7" fill="#f0f0f0"/><rect x="502" y="518" width="7" height="7" fill="#e7e6e4"/><rect x="509" y="518" width="7" height="7" fill="#e4e4e4"/><rect x="516" y="518" width="7" height="7" fill="#e3e3e3"/><rect x="523" y="518" width="7" height="7" fill="#e9ebef"/><rect x="530" y="518" width="7" height="7" fill="#e6e8ea"/><rect x="537" y="518" width="7" height="7" fill="#e7e9ed"/><rect x="544" y="518" width="7" height="7" fill="#e2e4e6"/><rect x="551" y="518" width="7" height="7" fill="#ececec"/><rect x="558" y="518" width="7" height="7" fill="#e4e6ea"/><rect x="565" y="518" width="7" height="7" fill="#eef0f4"/><rect x="215" y="525" width="7" height="7" fill="#c1c3c5"/><rect x="222" y="525" width="7" height="7" fill="#d7d7d7"/><rect x="229" y="525" width="7" height="7" fill="#d2d1cf"/><rect x="236" y="525" width="7" height="7" fill="#cccbc9"/><rect x="243" y="525" width="7" height="7" fill="#ced0d4"/><rect x="250" y="525" width="7" height="7" fill="#c8c7c5"/><rect x="215" y="532" width="7" height="7" fill="#e6e5e3"/><rect x="222" y="532" width="7" height="7" fill="#e0dedb"/><rect x="229" y="532" width="7" height="7" fill="#f1f3f7"/><rect x="236" y="532" width="7" height="7" fill="#e5e3e0"/><rect x="243" y="532" width="7" height="7" fill="#d9dbdf"/><rect x="250" y="532" width="7" height="7" fill="#e0dfdd"/><rect x="215" y="553" width="7" height="7" fill="#dadada"/><rect x="222" y="553" width="7" height="7" fill="#eceef0"/><rect x="229" y="553" width="7" height="7" fill="#eae8e5"/><rect x="236" y="553" width="7" height="7" fill="#f3f2f0"/><rect x="243" y="553" width="7" height="7" fill="#e3e5e7"/><rect x="250" y="553" width="7" height="7" fill="#e2e4e6"/><rect x="257" y="553" width="7" height="7" fill="#d9d9d9"/><rect x="264" y="553" width="7" height="7" fill="#f7f7f7"/><rect x="271" y="553" width="7" height="7" fill="#e3e3e3"/><rect x="278" y="553" width="7" height="7" fill="#eae9e7"/><rect x="285" y="553" width="7" height="7" fill="#dad9d7"/><rect x="292" y="553" width="7" height="7" fill="#e6e4e1"/><rect x="299" y="553" width="7" height="7" fill="#e2e4e6"/><rect x="306" y="553" width="7" height="7" fill="#eeece9"/><rect x="313" y="553" width="7" height="7" fill="#e3e3e3"/><rect x="320" y="553" width="7" height="7" fill="#d1d3d7"/><rect x="327" y="553" width="7" height="7" fill="#dee0e4"/><rect x="334" y="553" width="7" height="7" fill="#eaecf0"/><rect x="341" y="553" width="7" height="7" fill="#e5e3e0"/><rect x="348" y="553" width="7" height="7" fill="#e0dedb"/><rect x="355" y="553" width="7" height="7" fill="#e2e4e6"/><rect x="362" y="553" width="7" height="7" fill="#eae8e5"/><rect x="369" y="553" width="7" height="7" fill="#e2e0dd"/><rect x="376" y="553" width="7" height="7" fill="#e9ebed"/><rect x="383" y="553" width="7" height="7" fill="#d8d8d8"/><rect x="390" y="553" width="7" height="7" fill="#e5e4e2"/><rect x="397" y="553" width="7" height="7" fill="#eae9e7"/><rect x="404" y="553" width="7" height="7" fill="#e5e3e0"/><rect x="411" y="553" width="7" height="7" fill="#ededed"/><rect x="418" y="553" width="7" height="7" fill="#d2d4d8"/><rect x="425" y="553" width="7" height="7" fill="#e2e4e6"/><rect x="215" y="560" width="7" height="7" fill="#caccce"/><rect x="222" y="560" width="7" height="7" fill="#c7c9cb"/><rect x="229" y="560" width="7" height="7" fill="#cfcdca"/><rect x="236" y="560" width="7" height="7" fill="#bdbdbd"/><rect x="243" y="560" width="7" height="7" fill="#cbcbcb"/><rect x="250" y="560" width="7" height="7" fill="#b6b8bc"/><rect x="257" y="560" width="7" height="7" fill="#b9b7b4"/><rect x="264" y="560" width="7" height="7" fill="#d4d4d4"/><rect x="271" y="560" width="7" height="7" fill="#cccac7"/><rect x="278" y="560" width="7" height="7" fill="#cdcbc8"/><rect x="285" y="560" width="7" height="7" fill="#c7c7c7"/><rect x="292" y="560" width="7" height="7" fill="#cbcdd1"/><rect x="299" y="560" width="7" height="7" fill="#bcbab7"/><rect x="306" y="560" width="7" height="7" fill="#c3c3c3"/><rect x="313" y="560" width="7" height="7" fill="#c7c6c4"/><rect x="320" y="560" width="7" height="7" fill="#c3c3c3"/><rect x="327" y="560" width="7" height="7" fill="#c9c8c6"/><rect x="334" y="560" width="7" height="7" fill="#c1c3c5"/><rect x="341" y="560" width="7" height="7" fill="#c1c1c1"/><rect x="348" y="560" width="7" height="7" fill="#bcbec2"/><rect x="355" y="560" width="7" height="7" fill="#bfbebc"/><rect x="362" y="560" width="7" height="7" fill="#dfdedc"/><rect x="369" y="560" width="7" height="7" fill="#c6c6c6"/><rect x="376" y="560" width="7" height="7" fill="#bec0c4"/><rect x="383" y="560" width="7" height="7" fill="#dbdad8"/><rect x="390" y="560" width="7" height="7" fill="#acaeb2"/><rect x="397" y="560" width="7" height="7" fill="#d8d6d3"/><rect x="404" y="560" width="7" height="7" fill="#bcbcbc"/><rect x="411" y="560" width="7" height="7" fill="#d4d3d1"/><rect x="418" y="560" width="7" height="7" fill="#d3d3d3"/><rect x="425" y="560" width="7" height="7" fill="#c2c1bf"/><rect x="215" y="581" width="7" height="7" fill="#eae8e5"/><rect x="222" y="581" width="7" height="7" fill="#edebe8"/><rect x="229" y="581" width="7" height="7" fill="#f8f7f5"/><rect x="236" y="581" width="7" height="7" fill="#eeeeee"/><rect x="243" y="581" width="7" height="7" fill="#dfe1e3"/><rect x="250" y="581" width="7" height="7" fill="#e9e7e4"/><rect x="257" y="581" width="7" height="7" fill="#eef0f2"/><rect x="264" y="581" width="7" height="7" fill="#f3f1ee"/><rect x="271" y="581" width="7" height="7" fill="#f3f2f0"/><rect x="278" y="581" width="7" height="7" fill="#eeece9"/><rect x="285" y="581" width="7" height="7" fill="#eaeaea"/><rect x="292" y="581" width="7" height="7" fill="#fbfaf8"/><rect x="299" y="581" width="7" height="7" fill="#edecea"/><rect x="306" y="581" width="7" height="7" fill="#f5f5f5"/><rect x="215" y="588" width="7" height="7" fill="#cac8c5"/><rect x="222" y="588" width="7" height="7" fill="#aba9a6"/><rect x="229" y="588" width="7" height="7" fill="#a7a5a2"/><rect x="236" y="588" width="7" height="7" fill="#a9a8a6"/><rect x="243" y="588" width="7" height="7" fill="#bdbcba"/><rect x="250" y="588" width="7" height="7" fill="#bec0c2"/><rect x="257" y="588" width="7" height="7" fill="#c0bebb"/><rect x="264" y="588" width="7" height="7" fill="#c4c2bf"/><rect x="271" y="588" width="7" height="7" fill="#d4d2cf"/><rect x="278" y="588" width="7" height="7" fill="#b0b0b0"/><rect x="285" y="588" width="7" height="7" fill="#cccccc"/><rect x="292" y="588" width="7" height="7" fill="#9ea0a4"/><rect x="299" y="588" width="7" height="7" fill="#c3c5c7"/><rect x="306" y="588" width="7" height="7" fill="#c1c3c7"/><rect x="209" y="262" width="2" height="29" fill="#cdcdcd"/><rect x="211" y="259" width="377" height="7" fill="#dfdfdf"/><rect x="211" y="287" width="377" height="7" fill="#d9d9d9"/><rect x="215" y="273" width="7" height="7" fill="#9a9a9a"/><rect x="222" y="273" width="7" height="7" fill="#8f8680"/><rect x="229" y="273" width="7" height="7" fill="#8c909a"/><rect x="236" y="273" width="7" height="7" fill="#8a8581"/><rect x="243" y="273" width="7" height="7" fill="#9a9b9d"/><rect x="250" y="273" width="7" height="7" fill="#96969a"/><rect x="257" y="273" width="7" height="7" fill="#a6a2a2"/><rect x="264" y="273" width="7" height="7" fill="#92928e"/><rect x="271" y="273" width="7" height="7" fill="#a4a5a7"/><rect x="278" y="273" width="7" height="7" fill="#9c9b98"/><rect x="285" y="273" width="7" height="7" fill="#8e8d94"/><rect x="215" y="266" width="7" height="7" fill="#c9c9c9"/><rect x="222" y="266" width="7" height="7" fill="#c8c9c9"/><rect x="229" y="266" width="7" height="7" fill="#cacaca"/><rect x="271" y="266" width="7" height="7" fill="#c0bfbd"/><rect x="278" y="266" width="7" height="7" fill="#cac9c9"/><rect x="292" y="266" width="7" height="7" fill="#c9c9c9"/><rect x="229" y="280" width="7" height="7" fill="#c5c4c2"/><rect x="236" y="280" width="7" height="7" fill="#c0c0c0"/><rect x="264" y="280" width="7" height="7" fill="#c3c2c0"/></g></svg>

<!-- footer -->
<div class="a" style="left:208px;top:612px;width:47px;height:21px;border:1px solid #8f8f8f;border-radius:2px;background:#fff"></div>
<div class="txt" style="left:215px;top:616px;font-size:11.5px;color:#111">25</div>
<svg class="a" style="left:240px;top:618px" width="12" height="10" viewBox="0 0 12 10"><path d="M1.5 2.5 L5.5 6.5 L9.5 2.5" fill="none" stroke="#111" stroke-width="1.8"/></svg>
<div class="txt" style="left:285px;top:618px;color:#555;font-size:10.3px">Previous</div>
<div class="a" style="left:338px;top:611px;width:29px;height:26px;border:1px solid #8a8a8a;border-radius:2px;background:linear-gradient(#f4f4f4,#dcdcdc)"></div>
<div class="txt" style="left:349.7px;top:617px;color:#222">1</div>
<div class="txt" style="left:398px;top:617px;color:#555">Next</div>
<div class="txt" style="left:208px;top:648px;color:#333;font-size:10.6px">Displaying 1 to 13 of 13 items</div>
<div class="txt" style="left:358px;top:648px;color:#333;font-size:10.6px">1 row selected</div>

<!-- annotations -->
<svg class="a" style="left:0;top:0" width="1607" height="678" viewBox="0 0 1607 678">
<defs><filter id="sh" x="-20%" y="-50%" width="140%" height="200%"><feGaussianBlur in="SourceAlpha" stdDeviation="1.7"/><feOffset dx="2.5" dy="2.8"/><feComponentTransfer><feFuncA type="linear" slope="0.45"/></feComponentTransfer><feMerge><feMergeNode/><feMergeNode in="SourceGraphic"/></feMerge></filter></defs>
<ellipse cx="236" cy="156.9" rx="39.2" ry="18.1" fill="none" stroke="#f80808" stroke-width="2.2" filter="url(#sh)"/>
<g filter="url(#sh)">
<line x1="660" y1="252.3" x2="330" y2="271.9" stroke="#fa0a0a" stroke-width="2.1"/>
<path d="M322.2 272.5 L332.9 267.8 L331.4 271.9 L333.6 276 Z" fill="#fa0a0a"/>
</g>
</svg>
</body></html>
